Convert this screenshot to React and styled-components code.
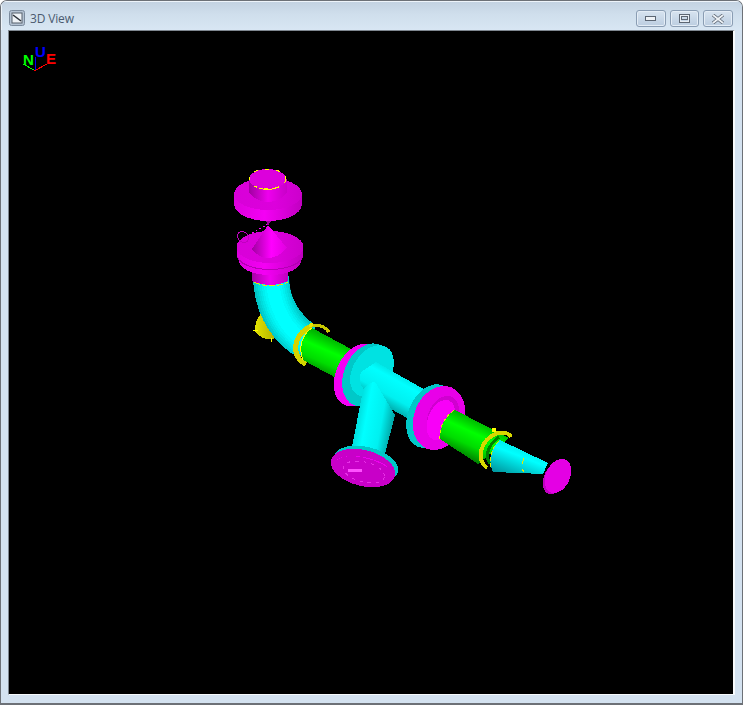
import React from "react";
import styled, { createGlobalStyle } from "styled-components";

const Global = createGlobalStyle`
  html, body { margin: 0; padding: 0; background: #fff; }
  #root { width: 743px; height: 705px; }
`;

const Window = styled.div`
  box-sizing: border-box;
  width: 743px;
  height: 705px;
  display: flex;
  flex-direction: column;
  border: 1px solid #6d7177;
  border-bottom-width: 2px;
  border-radius: 7px 7px 0 0;
  background: #d4e2f0;
  overflow: hidden;
`;

const TitleBar = styled.header`
  flex: none;
  height: 29px;
  box-sizing: border-box;
  display: flex;
  align-items: flex-start;
  padding: 9px 9px 0 8px;
  background: linear-gradient(180deg, #c3d2e1 0%, #cfdeec 45%, #d8e6f3 100%);
  box-shadow: inset 1px 1px 0 #eef4fa;
`;

const AppIcon = styled.svg`
  flex: none;
  width: 16px;
  height: 16px;
`;

const Title = styled.span`
  margin-left: 5px;
  font: 12px/17px "Open Sans", "Noto Sans", sans-serif;
  letter-spacing: -0.15px;
  color: #4a5a6e;
  flex: 1;
`;

const Controls = styled.div`
  display: flex;
  gap: 4px;
`;

const Control = styled.button`
  box-sizing: border-box;
  width: ${(p) => p.$w}px;
  height: 17px;
  padding: 0;
  display: flex;
  align-items: center;
  justify-content: center;
  border: 1px solid #8a9db3;
  border-radius: 3px;
  background: linear-gradient(180deg, #d8e4f0 0%, #c9d8e8 50%, #bccde0 100%);
  box-shadow: inset 0 0 0 1px #e4edf6;
`;

const Frame = styled.div`
  flex: 1;
  min-height: 0;
  display: flex;
  padding: 0 7px 8px 7px;
`;

const Viewport = styled.main`
  flex: 1;
  background: #000;
  border-style: solid;
  border-width: 1px 2px 1px 1px;
  border-color: #7f8790 #f7fafc #f7fafc #7f8790;
  overflow: hidden;
`;

const Scene = styled.svg`
  display: block;
  width: 100%;
  height: 100%;
`;

const AxisLabel = styled.text`
  font: bold 15px "Liberation Sans", Arial, sans-serif;
  fill: ${(p) => p.$c};
`;

const Y = "#e8e800";

const Grad = ({ id, x1, y1, x2, y2, stops }) => (
  <linearGradient id={id} gradientUnits="userSpaceOnUse" x1={x1} y1={y1} x2={x2} y2={y2}>
    {stops.map(([o, c]) => (
      <stop key={o} offset={o} stopColor={c} />
    ))}
  </linearGradient>
);

const cyanStops = [[0, "#00c4c4"], [0.35, "#00ffff"], [0.7, "#00f0f0"], [1, "#009c9c"]];
const greenStops = [[0, "#00b400"], [0.3, "#00ff00"], [0.6, "#00dc00"], [1, "#006400"]];
const elbowBands = [
  [34, "#00d0d0"],
  [30, "#00dcdc"],
  [26, "#00e6e6"],
  [22, "#00f0f0"],
  [18, "#00f8f8"],
  [13, "#00ffff"],
];

const Model = () => (
  <g shapeRendering="crispEdges">
    <defs>
      <Grad id="neck" x1="249" y1="0" x2="287" y2="0" stops={[[0, "#a000a0"], [0.5, "#ee00ee"], [1, "#c800c8"]]} />
      <Grad id="neck2" x1="252" y1="0" x2="288" y2="0" stops={[[0, "#a800a8"], [0.5, "#f000f0"], [1, "#c000c0"]]} />
      <Grad id="face" x1="234" y1="0" x2="302" y2="0" stops={[[0, "#d800d8"], [0.6, "#dc00dc"], [1, "#cc00cc"]]} />
      <Grad id="side" x1="234" y1="0" x2="302" y2="0" stops={[[0, "#dc00dc"], [0.45, "#f400f4"], [1, "#c000c0"]]} />
      <Grad id="cone" x1="252" y1="0" x2="287" y2="0" stops={[[0, "#a000a0"], [0.55, "#ff00ff"], [1, "#e000e0"]]} />
      <Grad id="green1" x1="319" y1="333" x2="302" y2="372" stops={greenStops} />
      <Grad id="green2" x1="470" y1="417" x2="452" y2="456" stops={greenStops} />
      <Grad id="main" x1="405" y1="366" x2="382" y2="408" stops={cyanStops} />
      <Grad id="branch" x1="350" y1="420" x2="394" y2="428" stops={cyanStops} />
      <Grad id="reducer" x1="526" y1="442" x2="512" y2="478" stops={[[0, "#00e0e0"], [0.4, "#00ffff"], [1, "#0098a0"]]} />
      <Grad id="blob" x1="254" y1="0" x2="276" y2="0" stops={[[0, "#e4e400"], [1, "#b0b000"]]} />
      <clipPath id="elbowClip">
        <path d="M253 276C253 310 270 342 299 358L316 326C298 312 289 298 289 276Z" />
      </clipPath>
    </defs>

    {/* axis triad */}
    <path d="M35 57V71" stroke="#0000ff" strokeWidth="1" fill="none" />
    <path d="M34 70L23 64" stroke="#00ff00" strokeWidth="1" fill="none" />
    <path d="M34 71L47 64" stroke="#ff0000" strokeWidth="1" fill="none" />
    <AxisLabel x="23" y="65" $c="#00ff00">N</AxisLabel>
    <AxisLabel x="35" y="57" $c="#0000ff">U</AxisLabel>
    <AxisLabel x="46" y="64" $c="#ff0000">E</AxisLabel>

    {/* yellow blob behind the elbow */}
    <path d="M262 312Q254 322 255 331Q262 341 274 339L280 330Z" fill="url(#blob)" />
    <path d="M253 330H258M271 338V342" stroke="#ffff00" strokeWidth="1" />

    {/* elbow */}
    <path d="M253 276C253 310 270 342 299 358L316 326C298 312 289 298 289 276Z" fill="#00c4c4" />
    <g clipPath="url(#elbowClip)" fill="none">
      {elbowBands.map(([w, c]) => (
        <path key={w} d="M272 270C272 306 285 330 309 344" stroke={c} strokeWidth={w} />
      ))}
    </g>

    {/* first yellow ring */}
    <path d="M306 364C291 358 292 335 311 326" fill="none" stroke="#d4d400" strokeWidth="5" />
    <path d="M311 326Q322 323 329 332" fill="none" stroke="#c8c800" strokeWidth="3" />
    <circle cx="311" cy="325" r="2" fill={Y} />

    {/* first green pipe */}
    <path d="M312 328L353 350L338 379L303 360C298 348 302 334 312 328Z" fill="url(#green1)" />
    <path d="M303 360C298 348 302 334 312 328" fill="none" stroke="#ffff00" strokeWidth="1" />

    {/* main run behind flange */}
    <path d="M376 362L434 395L418 424L360 392Z" fill="url(#main)" />

    {/* left flange */}
    <ellipse cx="358" cy="375" rx="22" ry="33" transform="rotate(24 358 375)" fill="#f400f4" />
    <ellipse cx="367" cy="375" rx="23" ry="33" transform="rotate(24 367 375)" fill="#00c8c8" />
    <ellipse cx="372" cy="371" rx="19" ry="28" transform="rotate(32 372 371)" fill="#00e2e2" />
    <path d="M376 362L434 395L418 424L395 411L382 400C366 396 356 384 361 372Z" fill="url(#main)" />

    {/* branch */}
    <path d="M363 390C366 384 372 382 375 382L395 415L385 454L352 447Z" fill="url(#branch)" />

    {/* bottom flange */}
    <ellipse cx="366" cy="464" rx="33" ry="17" transform="rotate(14 366 464)" fill="#00c8c8" />
    <ellipse cx="363" cy="468" rx="33" ry="18" transform="rotate(14 363 468)" fill="#c800c8" />
    <path d="M335 461Q348 452 372 459Q385 463 390 469Q375 458 352 456Q340 456 335 461Z" fill="#f000f0" />
    <ellipse cx="364" cy="472" rx="21" ry="10" transform="rotate(14 364 472)" fill="none" stroke="#e830e8" strokeWidth="1" strokeDasharray="3 5" />
    <rect x="348" y="469" width="14" height="3" fill="#ff50ff" />

    {/* right flange */}
    <ellipse cx="430" cy="416" rx="22" ry="33" transform="rotate(22 430 416)" fill="#00c8c8" />
    <ellipse cx="439" cy="418" rx="25" ry="33" transform="rotate(22 439 418)" fill="#e800e8" />
    <ellipse cx="443" cy="417" rx="15" ry="22" transform="rotate(22 443 417)" fill="#d000d0" />
    <ellipse cx="441" cy="420" rx="13" ry="21" transform="rotate(22 441 420)" fill="#f800f8" />

    {/* second green pipe */}
    <path d="M455 410L509 438L478 464L440 439C439 428 445 415 455 410Z" fill="url(#green2)" />
    <path d="M440 439C439 428 445 415 455 410" fill="none" stroke={Y} strokeWidth="1" strokeDasharray="3 3" />

    {/* reducer */}
    <path d="M500 440L548 463L543 474L493 472C487 460 492 446 500 440Z" fill="url(#reducer)" />
    <path d="M524 458L522 464M522 469L524 472" stroke={Y} strokeWidth="1" fill="none" />

    {/* second yellow ring */}
    <path d="M487 468C475 458 481 440 497 433Q508 431 511 437" fill="none" stroke="#d8d800" strokeWidth="4" />
    <path d="M490 464C484 455 489 444 499 437" fill="none" stroke="#008000" strokeWidth="3" />
    <path d="M499 441C493 447 489 455 491 467" fill="none" stroke={Y} strokeWidth="1" strokeDasharray="4 2" />
    <circle cx="494" cy="430" r="2.5" fill="#ffff00" />

    {/* end cap */}
    <ellipse cx="555" cy="478" rx="11" ry="17" transform="rotate(25 555 478)" fill="#c000c0" />
    <ellipse cx="558" cy="476" rx="12" ry="18" transform="rotate(25 558 476)" fill="#e400e4" />

    {/* lower magenta stack */}
    <path d="M252 268V281Q270 289 288 281V268Z" fill="url(#neck2)" />
    <path d="M254 282Q271 290 288 282" fill="none" stroke={Y} strokeWidth="1" strokeDasharray="6 2" />
    <ellipse cx="270" cy="261" rx="31" ry="14" fill="url(#side)" />
    <ellipse cx="270" cy="255" rx="33.5" ry="15" fill="#b400b4" />
    <ellipse cx="270" cy="253" rx="33.5" ry="16" fill="url(#side)" />
    <ellipse cx="270" cy="247" rx="33.5" ry="16" fill="url(#face)" />
    <path d="M268 225L287 248Q278 258 268 258Q259 258 252 249Z" fill="url(#cone)" />
    <path d="M268 224L252 233" stroke="#ff00ff" strokeWidth="1" strokeDasharray="2 2" fill="none" />
    <ellipse cx="243" cy="237" rx="5" ry="6" transform="rotate(-40 243 237)" fill="none" stroke="#c000c0" strokeWidth="1" />
    <path d="M266 221L271 221L268 226Z" fill="#a000a0" />

    {/* upper magenta stack */}
    <path d="M234 194V204C234 214 250 221 268 221C286 221 302 214 302 204V194Z" fill="url(#side)" />
    <ellipse cx="268" cy="194" rx="34" ry="16" fill="url(#face)" />
    <path d="M249 179V193Q258 202 268 202Q278 202 287 193V179Z" fill="url(#neck)" />
    <ellipse cx="267.5" cy="179" rx="18.5" ry="10" fill="#dc00dc" />
    <ellipse cx="267.5" cy="179" rx="18.5" ry="10" fill="none" stroke="#ffff00" strokeWidth="1" strokeDasharray="4 7" />
    <path d="M259 188.5Q268 190 276 188.5" fill="none" stroke="#ffff00" strokeWidth="1" />
  </g>
);

export default function App() {
  return (
    <>
      <Global />
      <Window>
        <TitleBar>
          <AppIcon viewBox="0 0 16 16">
            <rect x="0.5" y="0.5" width="15" height="15" rx="2" fill="#b4c2d2" stroke="#7b8a9c" />
            <rect x="3" y="3" width="10" height="10" fill="#eef2f6" stroke="#56606c" />
            <path d="M4 5L12 11" stroke="#2a3038" strokeWidth="1.5" />
          </AppIcon>
          <Title>3D View</Title>
          <Controls>
            <Control $w={30} aria-label="Minimize">
              <svg width="12" height="6" viewBox="0 0 12 6">
                <rect x="0.5" y="0.5" width="10" height="4" fill="#eef2f6" stroke="#5c6673" />
              </svg>
            </Control>
            <Control $w={29} aria-label="Restore">
              <svg width="12" height="10" viewBox="0 0 12 10">
                <rect x="1" y="1" width="9" height="7" fill="none" stroke="#e8eef4" strokeWidth="2" />
                <rect x="0.5" y="0.5" width="10" height="8" fill="none" stroke="#5c6673" />
                <rect x="2.5" y="2.5" width="6" height="3" fill="#c9d8e8" stroke="#5c6673" />
              </svg>
            </Control>
            <Control $w={30} aria-label="Close">
              <svg width="14" height="10" viewBox="0 0 14 10">
                <path d="M2 1L12 9M12 1L2 9" stroke="#5c6673" strokeWidth="3.4" />
                <path d="M2 1L12 9M12 1L2 9" stroke="#eef2f6" strokeWidth="1.8" />
              </svg>
            </Control>
          </Controls>
        </TitleBar>
        <Frame>
          <Viewport>
            <Scene viewBox="9 31 724 663" preserveAspectRatio="xMinYMin slice">
              <Model />
            </Scene>
          </Viewport>
        </Frame>
      </Window>
    </>
  );
}
